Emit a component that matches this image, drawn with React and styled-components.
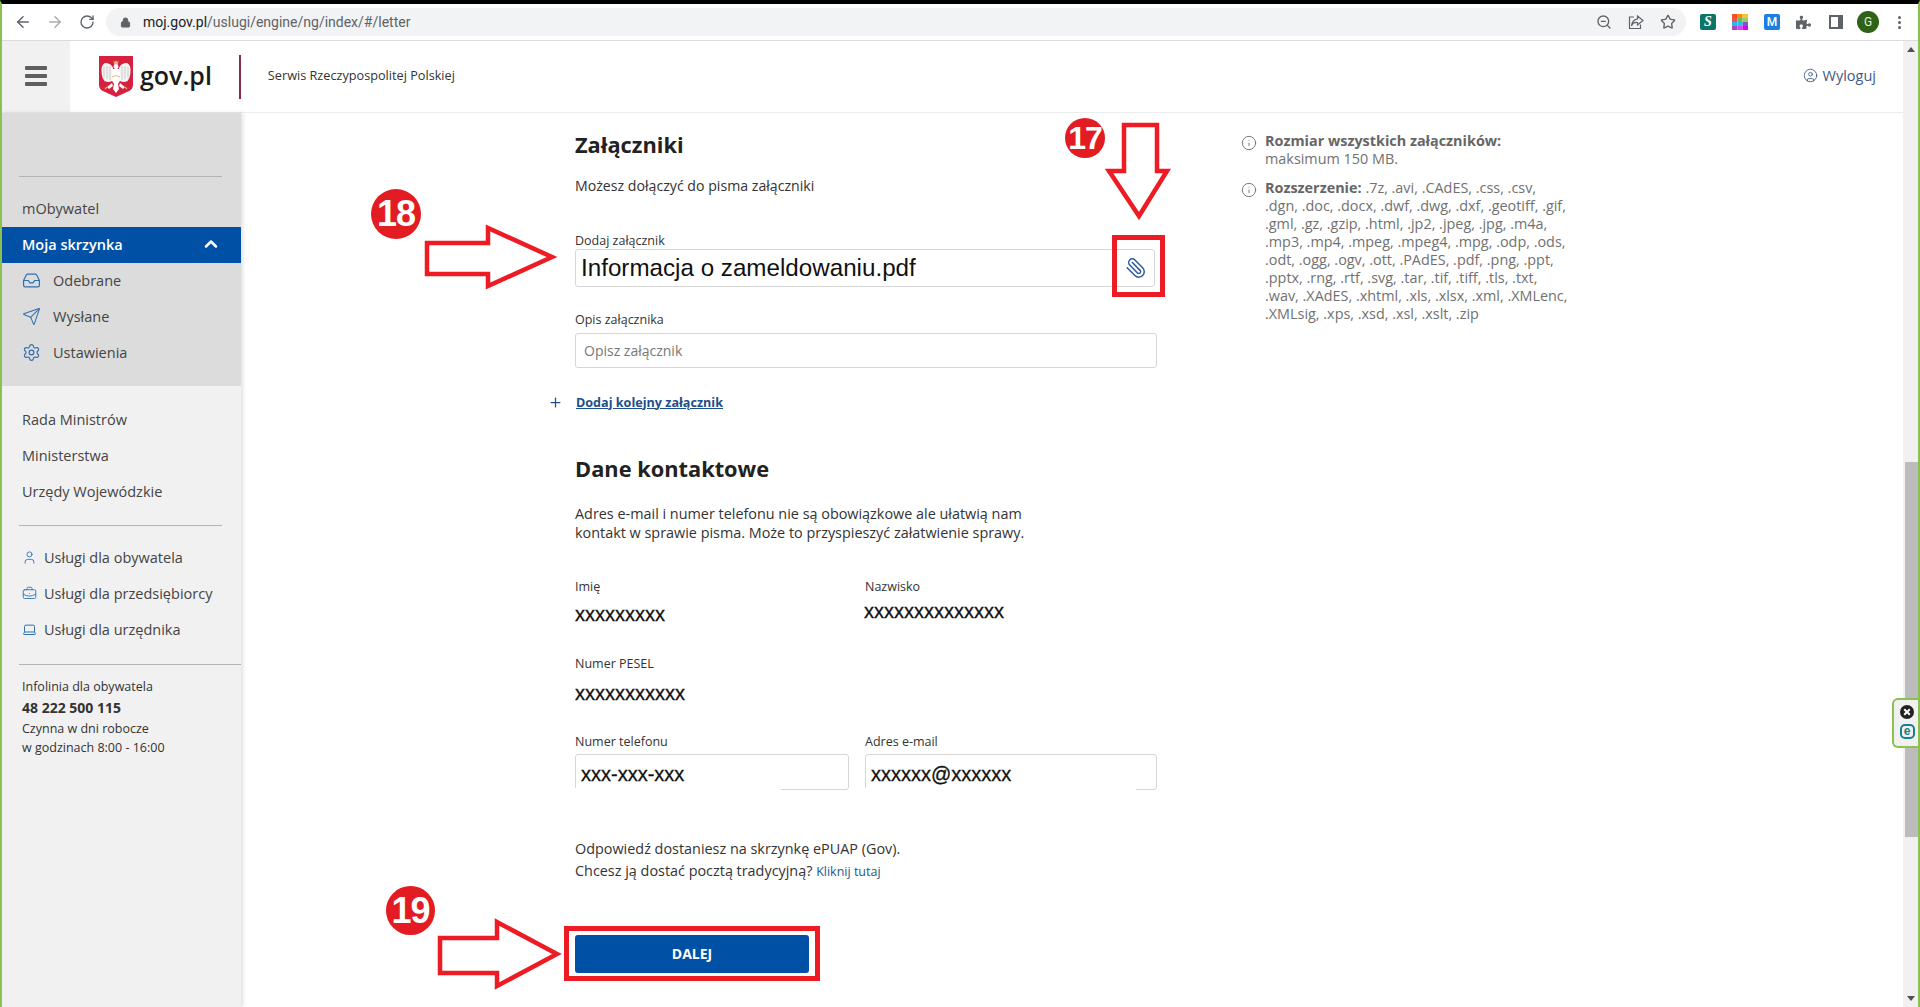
import React from "react";
import styled, { createGlobalStyle } from "styled-components";
import {
  ArrowLeft,
  ArrowRight,
  RotateCw,
  Lock,
  ZoomOut,
  Star,
  Inbox,
  Send,
  Settings,
  User,
  BriefcaseBusiness,
  Laptop,
  ChevronUp,
  Info,
  Plus,
  Paperclip,
  CircleUser,
} from "lucide-react";
import { FaPuzzlePiece } from "react-icons/fa";

const GlobalStyle = createGlobalStyle`
  html, body {
    margin: 0;
    padding: 0;
    background: #fff;
    overflow: hidden;
  }
  * { box-sizing: border-box; }
`;

const Page = styled.div`
  position: relative;
  width: 1920px;
  height: 1007px;
  overflow: hidden;
  display: flex;
  flex-direction: column;
  font-family: "Open Sans", sans-serif;
  color: #333;
  background: #fff;
  border-top: 4px solid #000;
  border-left: 2px solid #8cc152;
  border-right: 2px solid #8cc152;
`;

/* browser toolbar */
const ChromeBar = styled.div`
  height: 37px;
  flex: none;
  display: flex;
  align-items: center;
  border-bottom: 1px solid #dadce0;
  padding-left: 5px;
  color: #5f6368;
`;

const NavButton = styled.div`
  width: 32px;
  flex: none;
  display: flex;
  justify-content: center;
  color: ${(p) => (p.$muted ? "#a9adb1" : "#5f6368")};
`;

const AddressBar = styled.div`
  width: 1580px;
  flex: none;
  height: 28px;
  margin-left: 3px;
  border-radius: 14px;
  background: #f1f3f4;
  display: flex;
  align-items: center;
  padding-left: 14px;
  gap: 12px;
  font-family: Roboto, sans-serif;
  font-size: 14px;
  color: #5f6368;
`;

const Domain = styled.span`
  color: #202124;
`;

const AddressIcons = styled.div`
  margin-left: auto;
  display: flex;
  align-items: center;
  gap: 16px;
  padding-right: 10px;
`;

const ToolIcons = styled.div`
  display: flex;
  align-items: center;
  margin-left: 14px;
  gap: 16px;
`;

const ExtTile = styled.div`
  width: 16px;
  height: 16px;
  border-radius: 2px;
  background: ${(p) => p.$bg};
  color: #fff;
  display: flex;
  align-items: center;
  justify-content: center;
  font-family: "Liberation Serif", serif;
  font-size: 14px;
  font-style: italic;
  font-weight: 700;
`;

const ExtLetter = styled(ExtTile)`
  font-family: Roboto, sans-serif;
  font-style: normal;
  font-size: 12px;
  font-weight: 500;
`;

const SidePanelIcon = styled.div`
  width: 14px;
  height: 14px;
  margin-left: 2px;
  background: #fff;
  border: 2px solid #5f6368;
  border-right-width: 5px;
`;

const Avatar = styled.div`
  width: 22px;
  height: 22px;
  margin-left: -2px;
  border-radius: 50%;
  background: #2f6116;
  color: #e8f0e0;
  display: flex;
  align-items: center;
  justify-content: center;
  font-family: Roboto, sans-serif;
  font-size: 12px;
`;

const Dots = styled.div`
  margin-left: 3px;
  display: flex;
  flex-direction: column;
  gap: 2px;
  span {
    width: 3px;
    height: 3px;
    border-radius: 50%;
    background: #5f6368;
  }
`;

/* page under the toolbar */
const Viewport = styled.div`
  flex: 1;
  display: flex;
  min-height: 0;
`;

const Content = styled.div`
  flex: 1;
  display: flex;
  flex-direction: column;
  min-width: 0;
`;

const Header = styled.header`
  height: 72px;
  flex: none;
  display: flex;
  align-items: stretch;
  border-bottom: 1px solid #ececec;
`;

const BurgerCell = styled.div`
  width: 68px;
  padding-bottom: 2px;
  background: #f1f1f1;
  display: flex;
  flex-direction: column;
  gap: 4px;
  align-items: center;
  justify-content: center;
  span {
    width: 22px;
    height: 4px;
    background: #5f5f5f;
    border-radius: 1px;
  }
`;

const LogoLink = styled.div`
  display: flex;
  align-items: center;
  margin-left: 29px;
  gap: 7px;
  font-size: 25px;
  font-weight: 600;
  line-height: 30px;
  color: #1b1b1b;
`;

const LogoText = styled.span`
  padding-bottom: 4px;
`;

const BrandDivider = styled.div`
  width: 2px;
  height: 44px;
  align-self: center;
  margin-left: 27px;
  background: #8b2b4a;
`;

const ServiceName = styled.div`
  align-self: center;
  margin-left: 27px;
  padding-bottom: 3px;
  font-size: 12.7px;
  color: #333;
`;

const Logout = styled.div`
  margin-left: auto;
  align-self: center;
  margin-right: 27px;
  padding-bottom: 3px;
  display: flex;
  align-items: center;
  gap: 5px;
  font-size: 14.5px;
  color: #3f5a85;
`;

const Columns = styled.div`
  flex: 1;
  display: flex;
  min-height: 0;
`;

const Sidebar = styled.nav`
  width: 239px;
  flex: none;
  background: #f1f1f1;
  box-shadow: 2px 0 4px rgba(0, 0, 0, 0.12);
  font-size: 14.5px;
  color: #444;
`;

const SideTop = styled.div`
  background: #dcdcdc;
  padding: 63px 0 15px;
`;

const Rule = styled.hr`
  border: 0;
  height: 1px;
  background: #b4b4b4;
  margin: ${(p) => p.$my}px ${(p) => (p.$full ? 0 : 19)}px ${(p) => p.$my}px 17px;
`;

const SideRow = styled.div`
  height: 36px;
  margin-top: ${(p) => p.$mt || 0}px;
  display: flex;
  align-items: center;
  gap: ${(p) => p.$gap || 12}px;
  padding: 0 20px ${(p) => p.$lift || 2}px ${(p) => p.$pad || 20}px;
  background: ${(p) => (p.$active ? "#0051a5" : "transparent")};
  color: ${(p) => (p.$active ? "#fff" : "inherit")};
  font-weight: ${(p) => (p.$active ? 600 : 400)};
  svg {
    flex: none;
    color: ${(p) => (p.$active ? "#fff" : "#2f6fb0")};
  }
`;

const Push = styled.span`
  margin-left: auto;
  display: flex;
`;

const SideLinks = styled.div`
  padding-top: 16px;
`;

const Hotline = styled.div`
  margin-top: -3px;
  padding-left: 20px;
  font-size: 12.5px;
  line-height: 19px;
  color: #333;
  strong {
    display: block;
    font-size: 14px;
    line-height: 23px;
    font-weight: 700;
  }
`;

const Main = styled.main`
  flex: 1;
  display: flex;
  gap: 84px;
  padding-left: 334px;
`;

const Form = styled.div`
  width: 582px;
  flex: none;
  padding-top: 17px;
`;

const Heading = styled.h2`
  margin: ${(p) => p.$mt || 0}px 0 0;
  font-size: 21.8px;
  line-height: 30px;
  font-weight: 700;
  color: #222;
`;

const Lead = styled.p`
  margin: ${(p) => p.$mt || 0}px 0 0;
  font-size: ${(p) => p.$size || 14.4}px;
  line-height: ${(p) => p.$lh || 20}px;
  color: #333;
`;

const Label = styled.div`
  margin-top: ${(p) => p.$mt || 0}px;
  font-size: 12.5px;
  line-height: 18px;
  color: #333;
`;

const InputBox = styled.div`
  position: relative;
  margin-top: ${(p) => p.$mt || 0}px;
  width: ${(p) => (p.$w ? `${p.$w}px` : "100%")};
  height: ${(p) => p.$h}px;
  display: flex;
  align-items: center;
  padding: 0 5px;
  background: #fff;
  border: 1px solid #d6d6d6;
  border-radius: 3px;
  &::after {
    content: "";
    display: ${(p) => (p.$patch ? "block" : "none")};
    position: absolute;
    left: -1px;
    bottom: -1px;
    height: 2px;
    width: ${(p) => p.$patch}px;
    background: #fff;
  }
`;

const FileName = styled.span`
  font-family: "Liberation Sans", sans-serif;
  font-size: 24.2px;
  color: #111;
`;

const ClipButton = styled.span`
  margin-left: auto;
  margin-right: 2px;
  display: flex;
  color: #2a5a9a;
  transform: scaleX(-1);
`;

const Placeholder = styled.span`
  padding-left: 3px;
  font-size: 14px;
  color: #777;
`;

const AddRow = styled.div`
  margin: 24px 0 0 -27px;
  height: 20px;
  display: flex;
  align-items: center;
  gap: 13px;
  color: #1c4f8c;
  a {
    font-size: 12.6px;
    font-weight: 700;
    color: #1c4f8c;
    text-decoration: underline;
  }
`;

const ContactGrid = styled.div`
  display: grid;
  grid-template-columns: 274px 292px;
  column-gap: 16px;
  align-items: start;
`;

const Masked = styled.div`
  margin-top: ${(p) => p.$mt || 0}px;
  margin-left: ${(p) => p.$ml || 0}px;
  height: 24px;
  line-height: 24px;
  font-family: "Liberation Sans", sans-serif;
  font-size: 20px;
  color: #111;
  -webkit-text-stroke: 0.3px #111;
`;

const Kliknij = styled.a`
  font-size: 12.5px;
  color: #1c5a8c;
`;

const NextButton = styled.button`
  display: block;
  margin-top: 52px;
  width: 234px;
  height: 38px;
  padding: 0 0 2px;
  border: 0;
  border-radius: 3px;
  background: #0051a5;
  color: #fff;
  font-family: "Open Sans", sans-serif;
  font-size: 14px;
  font-weight: 700;
`;

const Aside = styled.aside`
  padding-top: 19px;
  font-size: 14.4px;
  line-height: 18px;
  color: #717171;
`;

const Note = styled.div`
  display: flex;
  gap: 8px;
  margin-bottom: 11px;
  white-space: nowrap;
  svg {
    flex: none;
    margin-top: 3px;
  }
  b {
    color: #666;
    font-weight: 700;
  }
`;

const Scrollbar = styled.div`
  width: 15px;
  flex: none;
  background: #f1f1f1;
  display: flex;
  flex-direction: column;
  align-items: flex-end;
  position: relative;
`;

const ScrollArrow = styled.div`
  width: 100%;
  height: 17px;
  display: flex;
  align-items: center;
  justify-content: center;
  &::before {
    content: "";
    border-left: 4px solid transparent;
    border-right: 4px solid transparent;
    ${(p) => (p.$down ? "border-top" : "border-bottom")}: 5px solid #505050;
  }
`;

const ScrollThumb = styled.div`
  width: 13px;
  height: 375px;
  margin-top: 404px;
  background: #bcbcbc;
`;

const ScrollRest = styled.div`
  flex: 1;
`;

/* ESET tab lying over the scrollbar */
const EsetTab = styled.div`
  position: absolute;
  right: 0;
  top: 657px;
  width: 26px;
  height: 50px;
  background: #f1f1f1;
  border: 2px solid #8cc152;
  border-right: 0;
  border-radius: 6px 0 0 6px;
  display: flex;
  flex-direction: column;
  align-items: center;
  padding: 5px 0 0 2px;
  gap: 5px;
`;

const EsetE = styled.div`
  width: 15px;
  height: 15px;
  border-radius: 5px;
  border: 2px solid #17808c;
  color: #17808c;
  font-family: "Liberation Sans", sans-serif;
  font-size: 12px;
  font-weight: 700;
  line-height: 10px;
  text-align: center;
`;

/* red annotations drawn over the screenshot */
const Badge = styled.div`
  position: absolute;
  left: ${(p) => p.$x}px;
  top: ${(p) => p.$y}px;
  width: ${(p) => p.$d}px;
  height: ${(p) => p.$d}px;
  border-radius: 50%;
  background: #e31b23;
  color: #fff;
  display: flex;
  align-items: center;
  justify-content: center;
  font-family: "Liberation Sans", sans-serif;
  font-weight: 700;
  font-size: ${(p) => p.$size}px;
  letter-spacing: -1px;
`;

const Frame = styled.div`
  position: absolute;
  left: ${(p) => p.$x}px;
  top: ${(p) => p.$y}px;
  width: ${(p) => p.$w}px;
  height: ${(p) => p.$h}px;
  border: 5px solid #ed1c24;
`;

const ArrowSvg = styled.svg`
  position: absolute;
  left: ${(p) => p.$x}px;
  top: ${(p) => p.$y}px;
  overflow: visible;
`;

function RedArrow({ x, y, w, h, points }) {
  return (
    <ArrowSvg $x={x} $y={y} width={w} height={h} viewBox={`0 0 ${w} ${h}`}>
      <polygon points={points} fill="#fff" stroke="#ed1c24" strokeWidth="4.5" strokeLinejoin="miter" />
    </ArrowSvg>
  );
}

function Eagle() {
  return (
    <svg width="34" height="41" viewBox="0 0 34 41">
      <path d="M0 0H34V29Q34 34 28 36L17 41L6 36Q0 34 0 29Z" fill="#d6203f" />
      <path d="M14.5 4L15.5 6L17 4.5L18.5 6L19.5 4L19 8H15Z" fill="#e9b35a" />
      <path d="M15 8.5Q17 7.5 19 8.5L19.5 12L18 13V20H16V13L14.5 11.5Z" fill="#fff" />
      <path d="M14 12Q12 7 6 7Q2 9 2.5 15Q2.5 21 5.5 25Q9 27 13 25L14 20Z" fill="#f3f3f3" />
      <path d="M20 12Q22 7 28 7Q32 9 31.5 15Q31.5 21 28.5 25Q25 27 21 25L20 20Z" fill="#f3f3f3" />
      <path d="M5 11V21M8 10V23M11 10V24M23 10V24M26 10V23M29 11V21" stroke="#c9c9c9" strokeWidth="0.9" />
      <path d="M13 13H21L21.5 24L19 28L20 33L17 37L14 33L15 28L12.5 24Z" fill="#fff" />
      <path d="M13 27L8 31L10 33L14 30ZM21 27L26 31L24 33L20 30Z" fill="#f3f3f3" />
      <path d="M13 21Q17 18 21 21" stroke="#e9b35a" strokeWidth="0.9" fill="none" />
      <path d="M8 31L6 33M26 31L28 33" stroke="#e9b35a" strokeWidth="1.2" />
    </svg>
  );
}

function ShareIcon() {
  return (
    <svg width="16" height="16" viewBox="0 0 16 16" fill="none" stroke="#5f6368" strokeWidth="1.2">
      <path d="M6 3H1.5V14.5H12.5V10.5" />
      <path d="M9.5 2L15 6.5L9.5 11V8.5Q5 8 3.5 12Q4 6 9.5 4.8Z" />
    </svg>
  );
}

function ColorGrid() {
  const colors = ["#f4511e", "#fb8c00", "#fbc02d", "#ef5350", "#66bb6a", "#9ccc65", "#29b6f6", "#26c6da", "#7e57c2", "#ab47bc", "#e040fb", "#d500f9"];
  return (
    <svg width="16" height="16" viewBox="0 0 12 12">
      {colors.map((c, i) => (
        <rect key={c} x={(i % 3) * 4} y={Math.floor(i / 3) * 3} width="4" height="3" fill={c} />
      ))}
    </svg>
  );
}

function CloseDot() {
  return (
    <svg width="14" height="14" viewBox="0 0 14 14">
      <circle cx="7" cy="7" r="7" fill="#222" />
      <path d="M4.2 4.2L9.8 9.8M9.8 4.2L4.2 9.8" stroke="#fff" strokeWidth="2" />
    </svg>
  );
}

const extensions = [
  ".7z, .avi, .CAdES, .css, .csv,",
  ".dgn, .doc, .docx, .dwf, .dwg, .dxf, .geotiff, .gif,",
  ".gml, .gz, .gzip, .html, .jp2, .jpeg, .jpg, .m4a,",
  ".mp3, .mp4, .mpeg, .mpeg4, .mpg, .odp, .ods,",
  ".odt, .ogg, .ogv, .ott, .PAdES, .pdf, .png, .ppt,",
  ".pptx, .rng, .rtf, .svg, .tar, .tif, .tiff, .tls, .txt,",
  ".wav, .XAdES, .xhtml, .xls, .xlsx, .xml, .XMLenc,",
  ".XMLsig, .xps, .xsd, .xsl, .xslt, .zip",
];

export default function App() {
  return (
    <>
      <GlobalStyle />
      <Page>
        <ChromeBar>
          <NavButton><ArrowLeft size={18} /></NavButton>
          <NavButton $muted><ArrowRight size={18} /></NavButton>
          <NavButton><RotateCw size={16} /></NavButton>
          <AddressBar>
            <Lock size={11} fill="#5f6368" />
            <span><Domain>moj.gov.pl</Domain>/uslugi/engine/ng/index/#/letter</span>
            <AddressIcons>
              <ZoomOut size={16} />
              <ShareIcon />
              <Star size={16} />
            </AddressIcons>
          </AddressBar>
          <ToolIcons>
            <ExtTile $bg="#0f7468">S</ExtTile>
            <ColorGrid />
            <ExtLetter $bg="#1a7fe0">M</ExtLetter>
            <FaPuzzlePiece size={15} color="#5f6368" />
            <SidePanelIcon />
            <Avatar>G</Avatar>
            <Dots><span /><span /><span /></Dots>
          </ToolIcons>
        </ChromeBar>

        <Viewport>
          <Content>
            <Header>
              <BurgerCell><span /><span /><span /></BurgerCell>
              <LogoLink>
                <Eagle />
                <LogoText>gov.pl</LogoText>
              </LogoLink>
              <BrandDivider />
              <ServiceName>Serwis Rzeczypospolitej Polskiej</ServiceName>
              <Logout>
                <CircleUser size={15} strokeWidth={1.4} />
                Wyloguj
              </Logout>
            </Header>

            <Columns>
              <Sidebar>
                <SideTop>
                  <Rule $my={0} />
                  <SideRow $mt={14}>mObywatel</SideRow>
                  <SideRow $active>
                    Moja skrzynka
                    <Push><ChevronUp size={20} strokeWidth={3} /></Push>
                  </SideRow>
                  <SideRow><Inbox size={19} strokeWidth={1.5} />Odebrane</SideRow>
                  <SideRow><Send size={19} strokeWidth={1.3} />Wysłane</SideRow>
                  <SideRow><Settings size={19} strokeWidth={1.5} />Ustawienia</SideRow>
                </SideTop>
                <SideLinks>
                  <SideRow>Rada Ministrów</SideRow>
                  <SideRow>Ministerstwa</SideRow>
                  <SideRow>Urzędy Wojewódzkie</SideRow>
                </SideLinks>
                <Rule $my={15} />
                <SideRow $gap={7} $lift={4}><User size={15} strokeWidth={1.4} />Usługi dla obywatela</SideRow>
                <SideRow $gap={7} $lift={4}><BriefcaseBusiness size={15} strokeWidth={1.4} />Usługi dla przedsiębiorcy</SideRow>
                <SideRow $gap={7} $lift={4}><Laptop size={15} strokeWidth={1.6} />Usługi dla urzędnika</SideRow>
                <Rule $my={15} $full />
                <Hotline>
                  Infolinia dla obywatela
                  <strong>48 222 500 115</strong>
                  Czynna w dni robocze
                  <br />
                  w godzinach 8:00 - 16:00
                </Hotline>
              </Sidebar>

              <Main>
                <Form>
                  <Heading>Załączniki</Heading>
                  <Lead $mt={16} $size={14.15}>Możesz dołączyć do pisma załączniki</Lead>

                  <Label $mt={36}>Dodaj załącznik</Label>
                  <InputBox $mt={-1} $h={38} $w={580}>
                    <FileName>Informacja o zameldowaniu.pdf</FileName>
                    <ClipButton><Paperclip size={22} strokeWidth={1.6} /></ClipButton>
                  </InputBox>

                  <Label $mt={24}>Opis załącznika</Label>
                  <InputBox $mt={4} $h={35}>
                    <Placeholder>Opisz załącznik</Placeholder>
                  </InputBox>

                  <AddRow>
                    <Plus size={15} strokeWidth={2} />
                    <a href="#add">Dodaj kolejny załącznik</a>
                  </AddRow>

                  <Heading $mt={42}>Dane kontaktowe</Heading>
                  <Lead $mt={20} $lh={19}>
                    Adres e-mail i numer telefonu nie są obowiązkowe ale ułatwią nam
                    <br />
                    kontakt w sprawie pisma. Może to przyspieszyć załatwienie sprawy.
                  </Lead>

                  <ContactGrid>
                    <div>
                      <Label $mt={36}>Imię</Label>
                      <Masked $mt={6}>xxxxxxxxx</Masked>
                      <Label $mt={29}>Numer PESEL</Label>
                      <Masked $mt={8}>xxxxxxxxxxx</Masked>
                      <Label $mt={28}>Numer telefonu</Label>
                      <InputBox $mt={3} $h={36} $patch={206}>
                        <Masked $mt={3}>xxx-xxx-xxx</Masked>
                      </InputBox>
                    </div>
                    <div>
                      <Label $mt={36}>Nazwisko</Label>
                      <Masked $mt={3} $ml={-1}>xxxxxxxxxxxxxx</Masked>
                      <Label $mt={32}>&nbsp;</Label>
                      <Masked $mt={8}>&nbsp;</Masked>
                      <Label $mt={28}>Adres e-mail</Label>
                      <InputBox $mt={3} $h={36} $patch={271}>
                        <Masked $mt={3}>xxxxxx@xxxxxx</Masked>
                      </InputBox>
                    </div>
                  </ContactGrid>

                  <Lead $mt={48} $lh={22}>
                    Odpowiedź dostaniesz na skrzynkę ePUAP (Gov).
                    <br />
                    Chcesz ją dostać pocztą tradycyjną? <Kliknij>Kliknij tutaj</Kliknij>
                  </Lead>

                  <NextButton>DALEJ</NextButton>
                </Form>

                <Aside>
                  <Note>
                    <Info size={16} strokeWidth={1.4} />
                    <div>
                      <b>Rozmiar wszystkich załączników:</b>
                      <br />
                      maksimum 150 MB.
                    </div>
                  </Note>
                  <Note>
                    <Info size={16} strokeWidth={1.4} />
                    <div>
                      <b>Rozszerzenie:</b> {extensions[0]}
                      {extensions.slice(1).map((line) => (
                        <div key={line}>{line}</div>
                      ))}
                    </div>
                  </Note>
                </Aside>
              </Main>
            </Columns>
          </Content>

          <Scrollbar>
            <ScrollArrow />
            <ScrollThumb />
            <ScrollRest />
            <ScrollArrow $down />
            <EsetTab>
              <CloseDot />
              <EsetE>e</EsetE>
            </EsetTab>
          </Scrollbar>
        </Viewport>

        <Badge $x={1063} $y={114} $d={40} $size={32}>17</Badge>
        <Badge $x={369} $y={185} $d={50} $size={36}>18</Badge>
        <Badge $x={384} $y={882} $d={49} $size={36}>19</Badge>

        <RedArrow x={1104} y={119} w={66} h={96} points="18,2 51,2 51,48 61,48 33,93 3,48 18,48" />
        <RedArrow x={423} y={221} w={132} h={64} points="2,18 63,18 63,3 127,32 63,61 63,49 2,49" />
        <RedArrow x={436} y={916} w={122} h={68} points="2,18 59,18 59,2 119,34 59,66 59,53 2,53" />

        <Frame $x={1110} $y={231} $w={53} $h={62} />
        <Frame $x={562} $y={922} $w={256} $h={55} />
      </Page>
    </>
  );
}
